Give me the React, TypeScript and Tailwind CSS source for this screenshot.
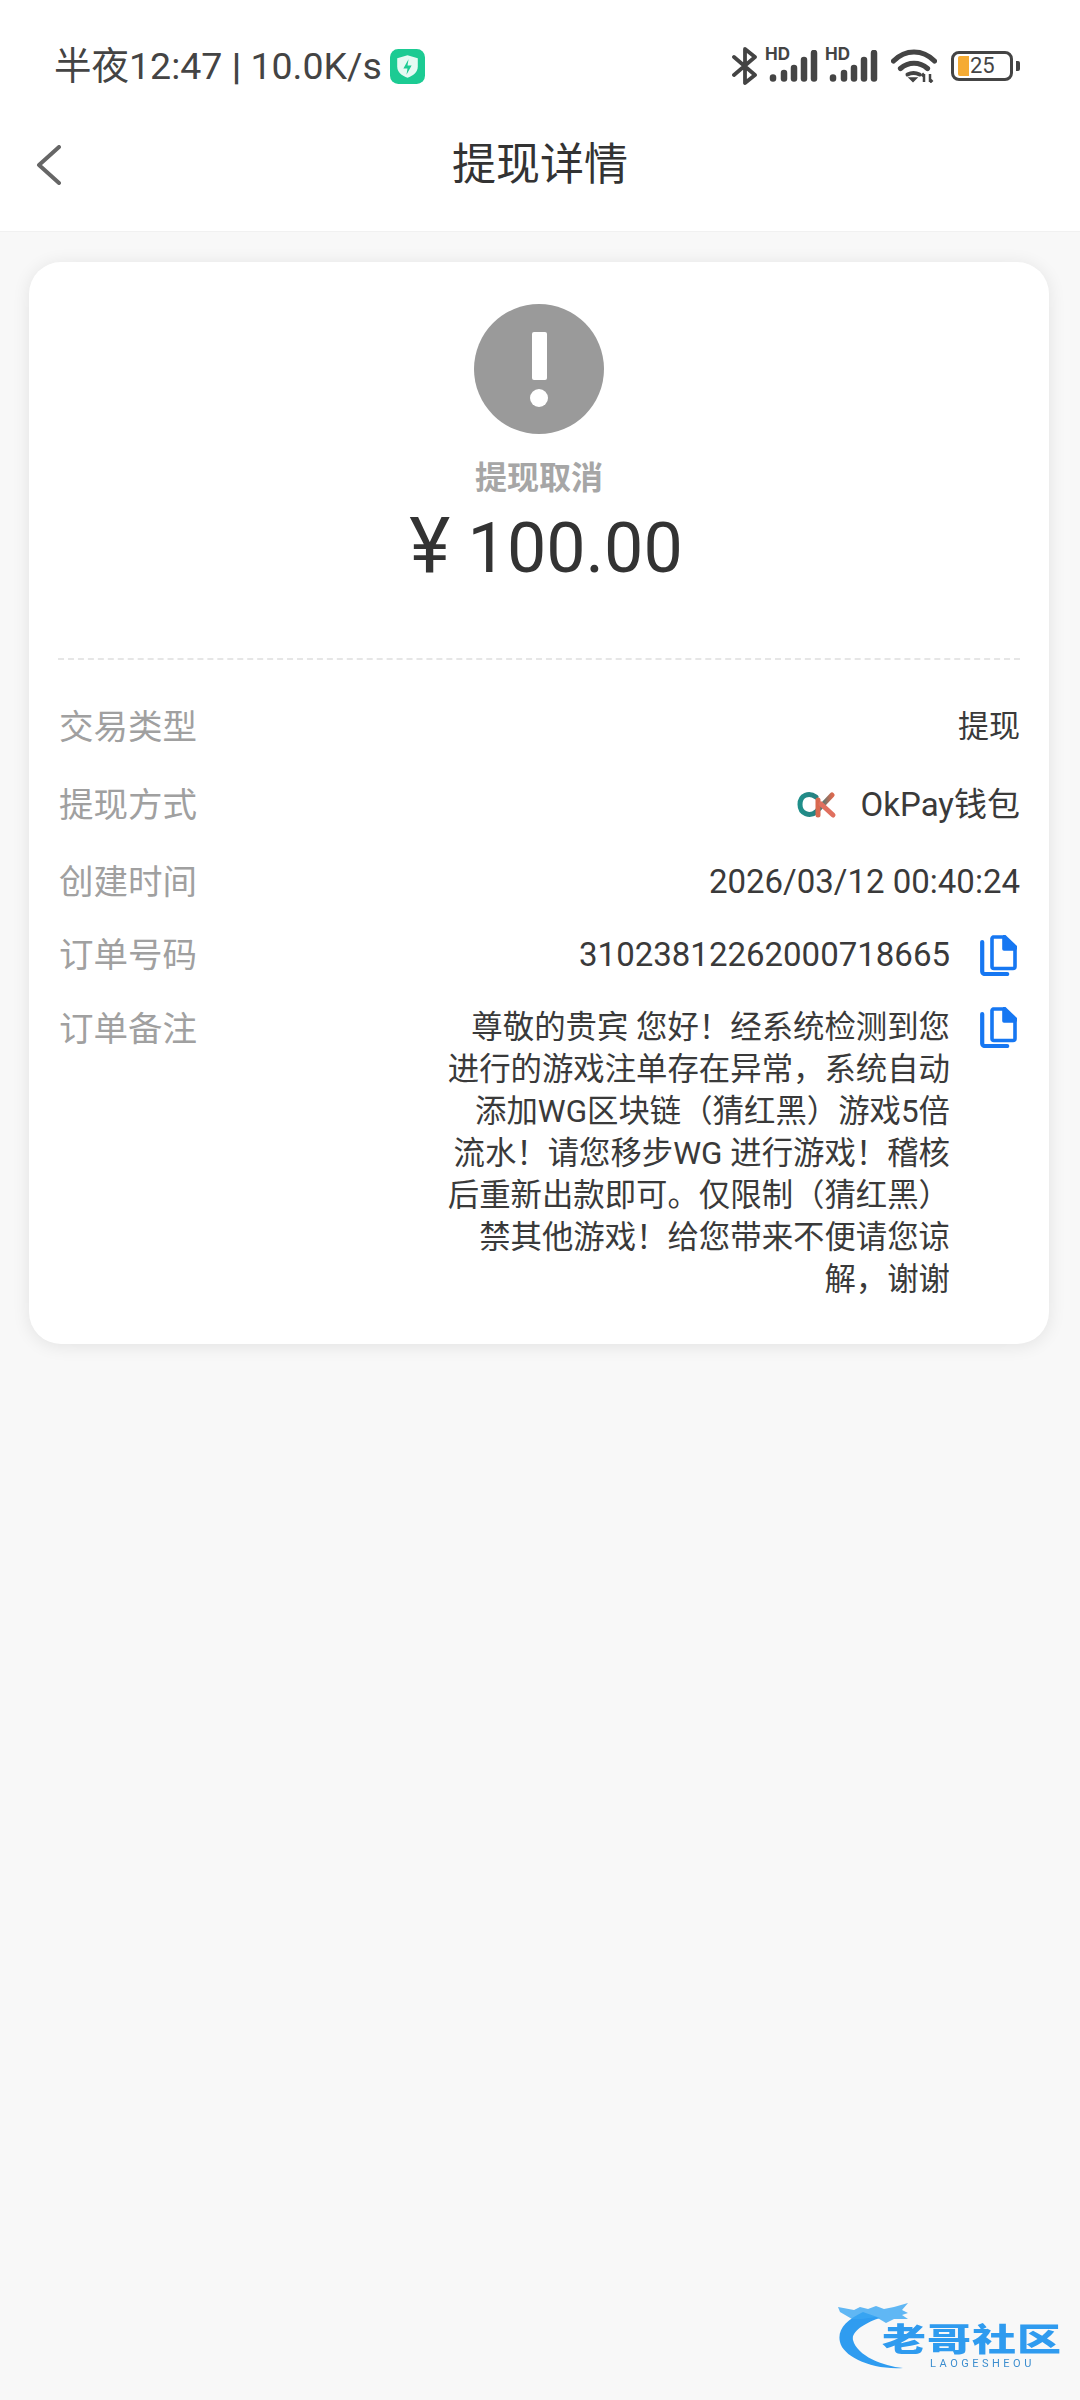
const FONT = "font-['Roboto','Noto_Sans_CJK_SC',sans-serif]";

function Signal() {
  return (
    <div className="relative w-[50px] h-[32px]">
      <span className="absolute left-[-3px] top-[-4px] text-[17px] leading-[16px] font-bold text-[#444] font-['Inter',sans-serif]">HD</span>
      <svg width="50" height="32" viewBox="0 0 50 32" className="absolute left-0 top-0">
        <g stroke="#444" strokeWidth="6.500" strokeLinecap="round" fill="none">
          <path d="M5 27.500v1" />
          <path d="M16 23v5.500" />
          <path d="M26 18v10.500" />
          <path d="M36 10v18.500" />
          <path d="M46 3v25.500" />
        </g>
      </svg>
    </div>
  );
}

function CopyIcon() {
  return (
    <svg width="37" height="41" viewBox="0 0 37 41" className="shrink-0">
      <path d="M2.200 7v29.500a2.500 2.500 0 0 0 2.500 2.500h22.500" fill="none" stroke="#1677f2" strokeWidth="4.200" strokeLinecap="round" />
      <path d="M12 3.500a2 2 0 0 1 1-1.500h11v12h11v17.500a2 2 0 0 1-2 2H14a2 2 0 0 1-2-2z" fill="none" stroke="#1677f2" strokeWidth="3.600" strokeLinejoin="round" />
      <path d="M23 0h2.500L37 11v3.500H23z" fill="#1677f2" />
    </svg>
  );
}

function Row({ label, children, className }: { label: string; children: React.ReactNode; className: string }) {
  return (
    <div className={`flex justify-between items-center h-[44px] ${className}`}>
      <span className="ml-[1px] text-[34.500px] leading-[44px] text-[#a0a0a0]">{label}</span>
      {children}
    </div>
  );
}

export default function App() {
  return (
    <div className={`relative min-h-[2400px] bg-[#f8f8f8] ${FONT}`}>
      <header className="bg-white h-[232px] border-b border-[#f1f1f1]">
        <div className="h-[98px] pt-[34px] pl-[54px] pr-[60px] flex justify-between">
          <div className="flex items-center h-[64px]">
            <span className="text-[37.500px] leading-[40px] text-[#444]">半夜12:47 <span className="font-bold">|</span> 10.0K/s</span>
            <svg width="35" height="35" viewBox="0 0 34 34" className="ml-[8px]">
              <rect width="34" height="34" rx="8" fill="#1ccb93" />
              <path d="M17 6l10 3v8c0 6-5 9-10 11-5-2-10-5-10-11V9z" fill="#e6faf3" />
              <path d="M18 10l-5 9h4l-1 6 5-9h-4z" fill="#1ccb93" />
            </svg>
          </div>
          <div className="flex items-center h-[64px] gap-[10px]">
            <svg width="26" height="38" viewBox="0 0 26 38" fill="none" stroke="#444" strokeWidth="3.800" strokeLinejoin="round" strokeLinecap="round">
              <path d="M2 10l21 18-10 8V2l10 8L2 28" />
            </svg>
            <Signal />
            <Signal />
            <svg width="46" height="34" viewBox="0 0 46 34" fill="none" stroke="#444" className="ml-[3px]">
              <path d="M2.500 12c12-12 29-12 41 0" strokeWidth="5.200" strokeLinecap="round" />
              <path d="M9.500 19.500c8-7 19-7 27 0" strokeWidth="5.200" strokeLinecap="round" />
              <path d="M16.500 25.500c4-2 8-2 12 0" strokeWidth="4" strokeLinecap="round" />
              <path d="M18.500 29l3.500 3.500 3.500-3.500z" fill="#444" strokeWidth="1.500" />
              <path d="M33 25v8M30.500 27l2.500-2.500M39 25v8M41.500 31l-2.500 2.500" strokeWidth="2.500" />
            </svg>
            <div className="flex items-center ml-[4px]">
              <div className="relative w-[62px] h-[30px] rounded-[8px] border-[3.500px] border-[#444] flex items-center">
                <div className="w-[11px] h-[20px] ml-[4px] bg-[#f5ab33] rounded-l-[2px]" />
                <span className="ml-[1px] text-[22px] leading-[22px] text-[#444]">25</span>
              </div>
              <div className="w-[4px] h-[10px] ml-[3px] bg-[#444] rounded-r-[2px]" />
            </div>
          </div>
        </div>
        <div className="relative h-[134px] flex items-center justify-center">
          <svg width="26" height="40" viewBox="0 0 26 40" fill="none" stroke="#666" strokeWidth="4" strokeLinecap="round" strokeLinejoin="round" className="absolute left-[36px] top-[47px]">
            <path d="M23 2L3 20l20 18" />
          </svg>
          <h1 className="text-[44px] leading-[60px] text-[#333] font-normal">提现详情</h1>
        </div>
      </header>

      <main className="mx-[29px] mt-[30px] w-[1020px] rounded-[32px] bg-white shadow-[0_2px_18px_rgba(0,0,0,0.09)] px-[29px] pt-[42px] pb-[43px]">
        <div className="flex flex-col items-center">
          <div className="w-[130px] h-[130px] rounded-full bg-[#9a9a9a] flex flex-col items-center pt-[28px]">
            <div className="w-[15px] h-[48px] bg-white rounded-[2px]" />
            <div className="w-[18px] h-[18px] mt-[9px] bg-white rounded-full" />
          </div>
          <div className="mt-[24px] text-[32px] leading-[40px] font-bold text-[#a6a6a6]">提现取消</div>
          <div className="mt-[8px] ml-[14px] h-[80px] text-[70px] leading-[80px] text-[#333]"><span className="text-[78px]">¥</span> 100.00</div>
        </div>

        <div className="mt-[72px] border-t-2 border-dashed border-[#e6e6e6]" />

        <Row label="交易类型" className="mt-[45px] mb-[34px]">
          <span className="text-[31px] leading-[44px] text-[#3a3a3a]">提现</span>
        </Row>
        <Row label="提现方式" className="mb-[33px]">
          <div className="flex items-center">
            <svg width="40" height="28" viewBox="0 0 40 28" fill="none" strokeWidth="5" strokeLinecap="round">
              <defs>
                <linearGradient id="okSwoosh" x1="0" y1="0" x2="1" y2="0">
                  <stop offset="0" stopColor="#1f8f8a" />
                  <stop offset="0.6" stopColor="#2a7f80" />
                  <stop offset="1" stopColor="#d8694f" />
                </linearGradient>
              </defs>
              <path d="M19 6C12 1 3 4 3 13.500S13 26 19 21L35 4" stroke="url(#okSwoosh)" />
              <path d="M21 9v15" stroke="#d8694f" />
              <path d="M24 13l12 11" stroke="#e0705f" />
            </svg>
            <span className="ml-[24px] text-[33px] leading-[44px] text-[#3a3a3a]">OkPay钱包</span>
          </div>
        </Row>
        <Row label="创建时间" className="mb-[29px]">
          <span className="text-[33px] leading-[44px] text-[#3a3a3a]">2026/03/12 00:40:24</span>
        </Row>
        <Row label="订单号码" className="mb-[30px]">
          <div className="flex items-center">
            <span className="text-[33px] leading-[44px] text-[#3a3a3a]">31023812262000718665</span>
            <div className="ml-[30px] mr-[3px]"><CopyIcon /></div>
          </div>
        </Row>
        <div className="flex justify-between items-start">
          <span className="ml-[1px] text-[34.500px] leading-[44px] text-[#a0a0a0]">订单备注</span>
          <div className="flex items-start">
            <p className="text-[31.400px] leading-[42px] text-[#3a3a3a] text-right">
              尊敬的贵宾 您好！经系统检测到您<br />
              进行的游戏注单存在异常，系统自动<br />
              添加WG区块链（猜红黑）游戏5倍<br />
              流水！请您移步WG 进行游戏！稽核<br />
              后重新出款即可。仅限制（猜红黑）<br />
              禁其他游戏！给您带来不便请您谅<br />
              解，谢谢
            </p>
            <div className="ml-[30px] mr-[3px]"><CopyIcon /></div>
          </div>
        </div>
      </main>

      <div className="absolute left-[836px] top-[2300px] w-[230px] h-[90px] blur-[0.7px]">
        <svg width="84" height="72" viewBox="0 0 84 72" className="absolute left-0 top-0" fill="none">
          <path d="M27 12C10 20 1 30 4 42c3 14 30 28 63 26-20-2-46-12-50-28-2-9 14-18 27-22z" fill="#2f9cf0" />
          <path d="M2 7l16 3 6-3 8 2 8-3 8 3 10-2 14-4-6 7 6 3-6 2 6 4-14 0-8 4-10-6-14 2-10 0-12-7z" fill="#3aa6f2" opacity="0.8" />
        </svg>
        <div className="absolute left-[46px] top-[22px] h-[30px] text-[44px] leading-[30px] font-black text-[#2f9bef] tracking-[1px] whitespace-nowrap scale-y-[0.72] font-['Noto_Sans_CJK_SC',sans-serif]">老哥社区</div>
        <div className="absolute left-[94px] top-[59px] text-[11px] leading-[10px] text-[#3d8ecf] tracking-[3.500px] whitespace-nowrap">LAOGESHEOU</div>
      </div>
    </div>
  );
}
